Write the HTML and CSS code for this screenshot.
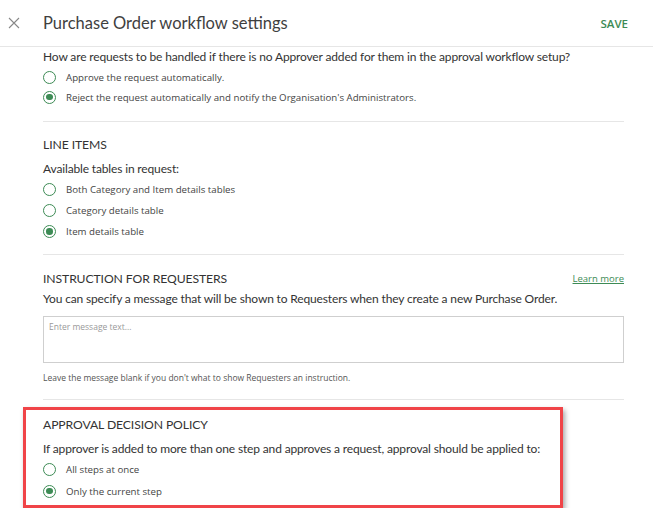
FILE: index.html
```html
<!DOCTYPE html>
<html>
<head>
<meta charset="utf-8">
<link rel="stylesheet" href="styles.css">
</head>
<body>
<div class="header">
  <svg class="close" width="12" height="12" viewBox="0 0 12 12"><path d="M1 1L11 11M11 1L1 11" stroke="#888" stroke-width="1.1" fill="none"/></svg>
  <div class="title">Purchase Order workflow settings</div>
  <div class="save">SAVE</div>
</div>
<div class="content">
  <div class="section first">
    <div class="question">How are requests to be handled if there is no Approver added for them in the approval workflow setup?</div>
    <div class="radio"><span class="dot"></span><span>Approve the request automatically.</span></div>
    <div class="radio"><span class="dot on"></span><span>Reject the request automatically and notify the Organisation's Administrators.</span></div>
  </div>
  <div class="section second">
    <div class="heading">LINE ITEMS</div>
    <div class="question">Available tables in request:</div>
    <div class="radio"><span class="dot"></span><span>Both Category and Item details tables</span></div>
    <div class="radio"><span class="dot"></span><span>Category details table</span></div>
    <div class="radio"><span class="dot on"></span><span>Item details table</span></div>
  </div>
  <div class="section third">
    <div class="heading-row"><div class="heading">INSTRUCTION FOR REQUESTERS</div><a class="learn">Learn more</a></div>
    <div class="question">You can specify a message that will be shown to Requesters when they create a new Purchase Order.</div>
    <div class="textarea">Enter message text...</div>
    <div class="hint">Leave the message blank if you don't what to show Requesters an instruction.</div>
  </div>
  <div class="highlight">
    <div class="heading">APPROVAL DECISION POLICY</div>
    <div class="question">If approver is added to more than one step and approves a request, approval should be applied to:</div>
    <div class="radio"><span class="dot"></span><span>All steps at once</span></div>
    <div class="radio tall"><span class="dot on"></span><span>Only the current step</span></div>
  </div>
</div>
</body>
</html>
```
FILE: styles.css
```css
body {
  margin: 0;
  background: #fff;
  font-family: Lato, "Open Sans", sans-serif;
  color: #333;
}
.header {
  height: 46px;
  border-bottom: 1px solid #e6e6e6;
  display: flex;
  align-items: center;
  padding: 0 25px 0 8px;
}
.close { margin-right: 23px; }
.title {
  font-size: 16.5px;
  color: #3f3f3f;
  flex: 1;
}
.save {
  font-family: "Open Sans", sans-serif;
  font-size: 11.5px;
  font-weight: 600;
  color: #3d8b55;
}
.content {
  margin-left: 43px;
  width: 581px;
}
.section {
  border-bottom: 1px solid #e6e6e6;
}
.section.first { padding: 1px 0 14px; }
.section.second { padding: 14px 0 12px; }
.section.third { padding: 15px 0 15px; }
.heading {
  font-size: 12.2px;
  letter-spacing: -0.1px;
  color: #333;
  line-height: 18px;
  margin-bottom: 6px;
}
.third .heading { margin-bottom: 2px; }
.heading-row {
  display: flex;
  justify-content: space-between;
  align-items: center;
}
.learn {
  font-family: "Open Sans", sans-serif;
  font-size: 9.5px;
  color: #3d8b55;
  text-decoration: underline;
  margin-bottom: 4px;
}
.question {
  font-size: 12px;
  letter-spacing: -0.15px;
  line-height: 18px;
  color: #333;
  margin-bottom: 1px;
}
.radio {
  display: flex;
  align-items: center;
  height: 21px;
  font-family: "Open Sans", sans-serif;
  font-size: 9.7px;
  color: #444;
}
.first .radio { height: 20px; }
.radio.tall { height: 22px; }
.dot {
  width: 11px;
  height: 11px;
  border: 1.3px solid #3d8b55;
  border-radius: 50%;
  margin-right: 10px;
  position: relative;
  flex: none;
}
.dot.on::after {
  content: "";
  position: absolute;
  left: 2.2px;
  top: 2.2px;
  width: 6.6px;
  height: 6.6px;
  border-radius: 50%;
  background: #3d8b55;
}
.textarea {
  margin-top: 8px;
  height: 37px;
  border: 1px solid #cfcfcf;
  padding: 4px 5px;
  font-family: "Open Sans", sans-serif;
  font-size: 8.5px;
  color: #999;
}
.hint {
  margin-top: 9px;
  font-family: "Open Sans", sans-serif;
  font-size: 8.5px;
  line-height: 12px;
  color: #555;
}
.highlight {
  margin: 7px 0 0 -20px;
  width: 517px;
  border: 3px solid #f04448;
  padding: 6px 0 3px 17px;
  box-shadow: 2px 3px 5px rgba(0,0,0,0.35);
}
```
